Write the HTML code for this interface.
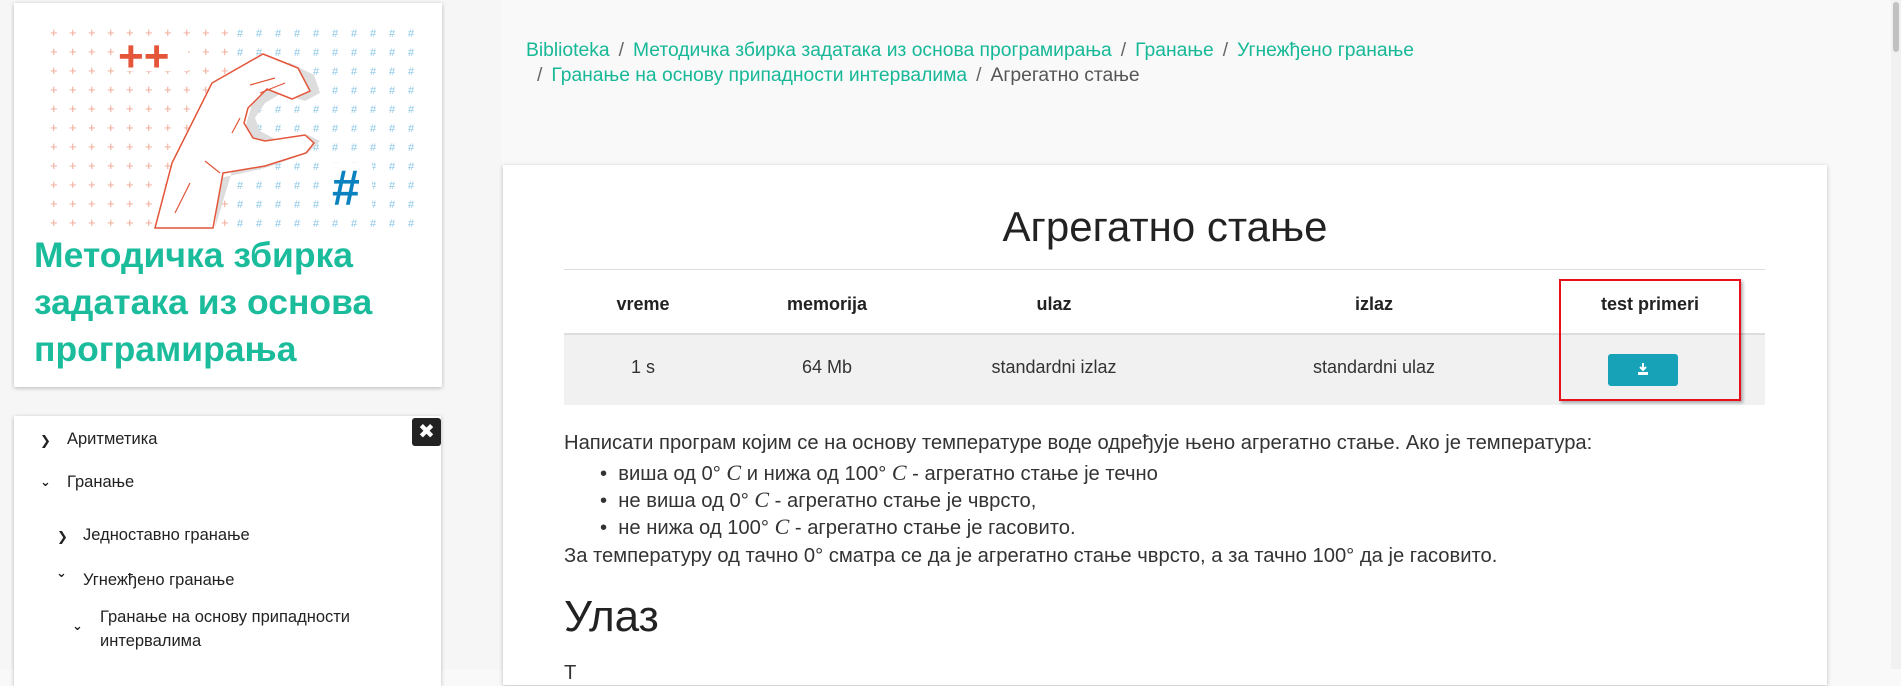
<!DOCTYPE html>
<html><head><meta charset="utf-8"><style>
body{margin:0;width:1901px;height:669px;overflow:hidden;background:#f9f9f9;font-family:"Liberation Sans","DejaVu Sans",sans-serif;color:#333;position:relative}
.abs{position:absolute}
.card{background:#fff;box-shadow:0 1px 4px rgba(0,0,0,.25)}
.bc{font-size:19.3px;color:#555}
.bc a{color:#17b897;text-decoration:none}
.bc .s{color:#666;margin:0 9px}
.th{font-weight:bold;font-size:18px;text-align:center;color:#222}
.td{font-size:18px;text-align:center;color:#333}
.nav{font-size:16.5px;color:#222}
.chev{font-size:13px;font-weight:bold}
.p{font-size:20.2px;color:#333;white-space:nowrap}
i.m{font-family:"Liberation Serif",serif;font-size:22px}
</style></head><body>
<div class="abs" style="left:0;top:0;width:502px;height:669px;background:#f6f6f6"></div>
<div class="abs" style="right:0;top:0;width:10px;height:669px;background:#f1f1f1"></div>
<div class="abs" style="right:2px;top:2px;width:6px;height:50px;background:#c1c1c1;border-radius:3px"></div>

<div class="abs card" style="left:14px;top:3px;width:428px;height:384px">
<svg class="abs" style="left:36px;top:20px" width="380" height="210" viewBox="0 0 380 210">
<g font-family="Liberation Sans" font-size="13" fill="#f0a894">
<text x="0 19 38 57 76 95 114 133 152 171" y="14">++++++++++</text>
<text x="0 19 38 57 76 95 114 133 152 171" y="33">++++++++++</text>
<text x="0 19 38 57 76 95 114 133 152 171" y="52">++++++++++</text>
<text x="0 19 38 57 76 95 114 133 152 171" y="71">++++++++++</text>
<text x="0 19 38 57 76 95 114 133 152 171" y="90">++++++++++</text>
<text x="0 19 38 57 76 95 114 133 152 171" y="109">++++++++++</text>
<text x="0 19 38 57 76 95 114 133 152 171" y="128">++++++++++</text>
<text x="0 19 38 57 76 95 114 133 152 171" y="147">++++++++++</text>
<text x="0 19 38 57 76 95 114 133 152 171" y="166">++++++++++</text>
<text x="0 19 38 57 76 95 114 133 152 171" y="185">++++++++++</text>
<text x="0 19 38 57 76 95 114 133 152 171" y="204">++++++++++</text>
</g>
<g font-family="Liberation Sans" font-size="11" fill="#8cc7e6">
<text x="187 206 225 244 263 282 301 320 339 358" y="14">##########</text>
<text x="187 206 225 244 263 282 301 320 339 358" y="33">##########</text>
<text x="187 206 225 244 263 282 301 320 339 358" y="52">##########</text>
<text x="187 206 225 244 263 282 301 320 339 358" y="71">##########</text>
<text x="187 206 225 244 263 282 301 320 339 358" y="90">##########</text>
<text x="187 206 225 244 263 282 301 320 339 358" y="109">##########</text>
<text x="187 206 225 244 263 282 301 320 339 358" y="128">##########</text>
<text x="187 206 225 244 263 282 301 320 339 358" y="147">##########</text>
<text x="187 206 225 244 263 282 301 320 339 358" y="166">##########</text>
<text x="187 206 225 244 263 282 301 320 339 358" y="185">##########</text>
<text x="187 206 225 244 263 282 301 320 339 358" y="204">##########</text>
</g>
<rect x="68" y="18" width="70" height="30" fill="#fff"/>
<text x="68" y="48" font-family="Liberation Sans" font-weight="bold" font-size="44" fill="#e4553a">++</text>
<rect x="280" y="140" width="42" height="48" fill="#fff"/>
<text x="282" y="182" font-family="Liberation Sans" font-weight="bold" font-size="50" fill="#0a82bf">#</text>
<path d="M165 205 L170 155 L215 145 L258 130 L270 118 L258 112 L225 116 L210 108 L205 95 L215 80 L232 70 L255 78 L270 70 L264 52 L240 40 L215 38 Z" fill="#ddd"/>
<path d="M105 205 L122 140 L162 60 L213 31 L248 45 L260 68 L242 76 L217 66 L198 85 L194 100 L203 115 L215 118 L255 112 L264 120 L256 130 L215 143 L173 150 L163 205 Z" fill="#fff" stroke="#e4553a" stroke-width="1.5"/>
<path d="M190 95 L182 110 M200 62 L225 55 M210 70 L235 60 M170 150 L155 138 M125 190 L140 160" stroke="#e4553a" stroke-width="1.2" fill="none"/>
</svg>
<div class="abs" style="left:20px;top:229px;font-size:35.5px;font-weight:bold;line-height:47px;color:#1abc9c;white-space:nowrap">Методичка збирка<br>задатака из основа<br>програмирања</div>
</div>

<div class="abs card" style="left:14px;top:416px;width:427px;height:270px"></div>
<div class="abs" style="left:412px;top:418px;width:29px;height:28px;background:#222;border-radius:3px;color:#fff;font-size:20px;font-weight:bold;text-align:center;line-height:28px">✖</div>
<div class="abs nav" style="left:40px;top:431px"><span class="chev">❯</span></div>
<div class="abs nav" style="left:67px;top:430px">Аритметика</div>
<div class="abs nav" style="left:40px;top:472px"><span class="chev">⌄</span></div>
<div class="abs nav" style="left:67px;top:473px">Гранање</div>
<div class="abs nav" style="left:57px;top:527px"><span class="chev">❯</span></div>
<div class="abs nav" style="left:83px;top:526px">Једноставно гранање</div>
<div class="abs nav" style="left:56px;top:563px"><span class="chev">⌄</span></div>
<div class="abs nav" style="left:83px;top:571px">Угнежђено гранање</div>
<div class="abs nav" style="left:72px;top:616px"><span class="chev">⌄</span></div>
<div class="abs nav" style="left:100px;top:605px;line-height:24px">Гранање на основу припадности<br>интервалима</div>

<div class="abs bc" style="left:526px;top:40px"><a>Biblioteka</a><span class="s">/</span><a>Методичка збирка задатака из основа програмирања</a><span class="s">/</span><a>Гранање</a><span class="s">/</span><a>Угнежђено гранање</a></div>
<div class="abs bc" style="left:528px;top:65px"><span class="s">/</span><a>Гранање на основу припадности интервалима</a><span class="s">/</span>Агрегатно стање</div>

<div class="abs card" style="left:503px;top:165px;width:1324px;height:520px"></div>
<div class="abs" style="left:503px;top:203px;width:1324px;text-align:center;font-size:42px;color:#222">Агрегатно стање</div>
<div class="abs" style="left:564px;top:269px;width:1201px;height:1px;background:#ddd"></div>
<div class="abs" style="left:564px;top:333px;width:1201px;height:70px;background:#f1f1f1;border-top:2px solid #ddd"></div>
<div class="abs th" style="left:564px;top:294px;width:158px">vreme</div>
<div class="abs th" style="left:722px;top:294px;width:210px">memorija</div>
<div class="abs th" style="left:932px;top:294px;width:244px">ulaz</div>
<div class="abs th" style="left:1176px;top:294px;width:396px">izlaz</div>
<div class="abs th" style="left:1559px;top:294px;width:182px">test primeri</div>
<div class="abs td" style="left:564px;top:357px;width:158px">1 s</div>
<div class="abs td" style="left:722px;top:357px;width:210px">64 Mb</div>
<div class="abs td" style="left:932px;top:357px;width:244px">standardni izlaz</div>
<div class="abs td" style="left:1176px;top:357px;width:396px">standardni ulaz</div>
<div class="abs" style="left:1559px;top:279px;width:178px;height:118px;border:2px solid #e8101a;box-shadow:2px 2px 3px rgba(0,0,0,.3)"></div>
<div class="abs" style="left:1608px;top:354px;width:70px;height:32px;background:#17a2b8;border-radius:3px"></div>
<svg class="abs" style="left:1636px;top:362px" width="14" height="14" viewBox="0 0 14 14"><path d="M7 1v7M4 5l3 3 3-3" stroke="#fff" stroke-width="2" fill="none"/><rect x="2" y="10" width="10" height="3" fill="#fff"/></svg>

<div class="abs p" style="left:564px;top:432px">Написати програм којим се на основу температуре воде одређује њено агрегатно стање. Ако је температура:</div>
<div class="abs p" style="left:600px;top:460px">•&nbsp; виша од 0° <i class="m">C</i> и нижа од 100° <i class="m">C</i> - агрегатно стање је течно</div>
<div class="abs p" style="left:600px;top:487px">•&nbsp; не виша од 0° <i class="m">C</i> - агрегатно стање је чврсто,</div>
<div class="abs p" style="left:600px;top:514px">•&nbsp; не нижа од 100° <i class="m">C</i> - агрегатно стање је гасовито.</div>
<div class="abs p" style="left:564px;top:545px">За температуру од тачно 0° сматра се да је агрегатно стање чврсто, а за тачно 100° да је гасовито.</div>
<div class="abs" style="left:564px;top:592px;font-size:44px;color:#222">Улаз</div>
<div class="abs p" style="left:564px;top:662px">Т</div>
</body></html>
